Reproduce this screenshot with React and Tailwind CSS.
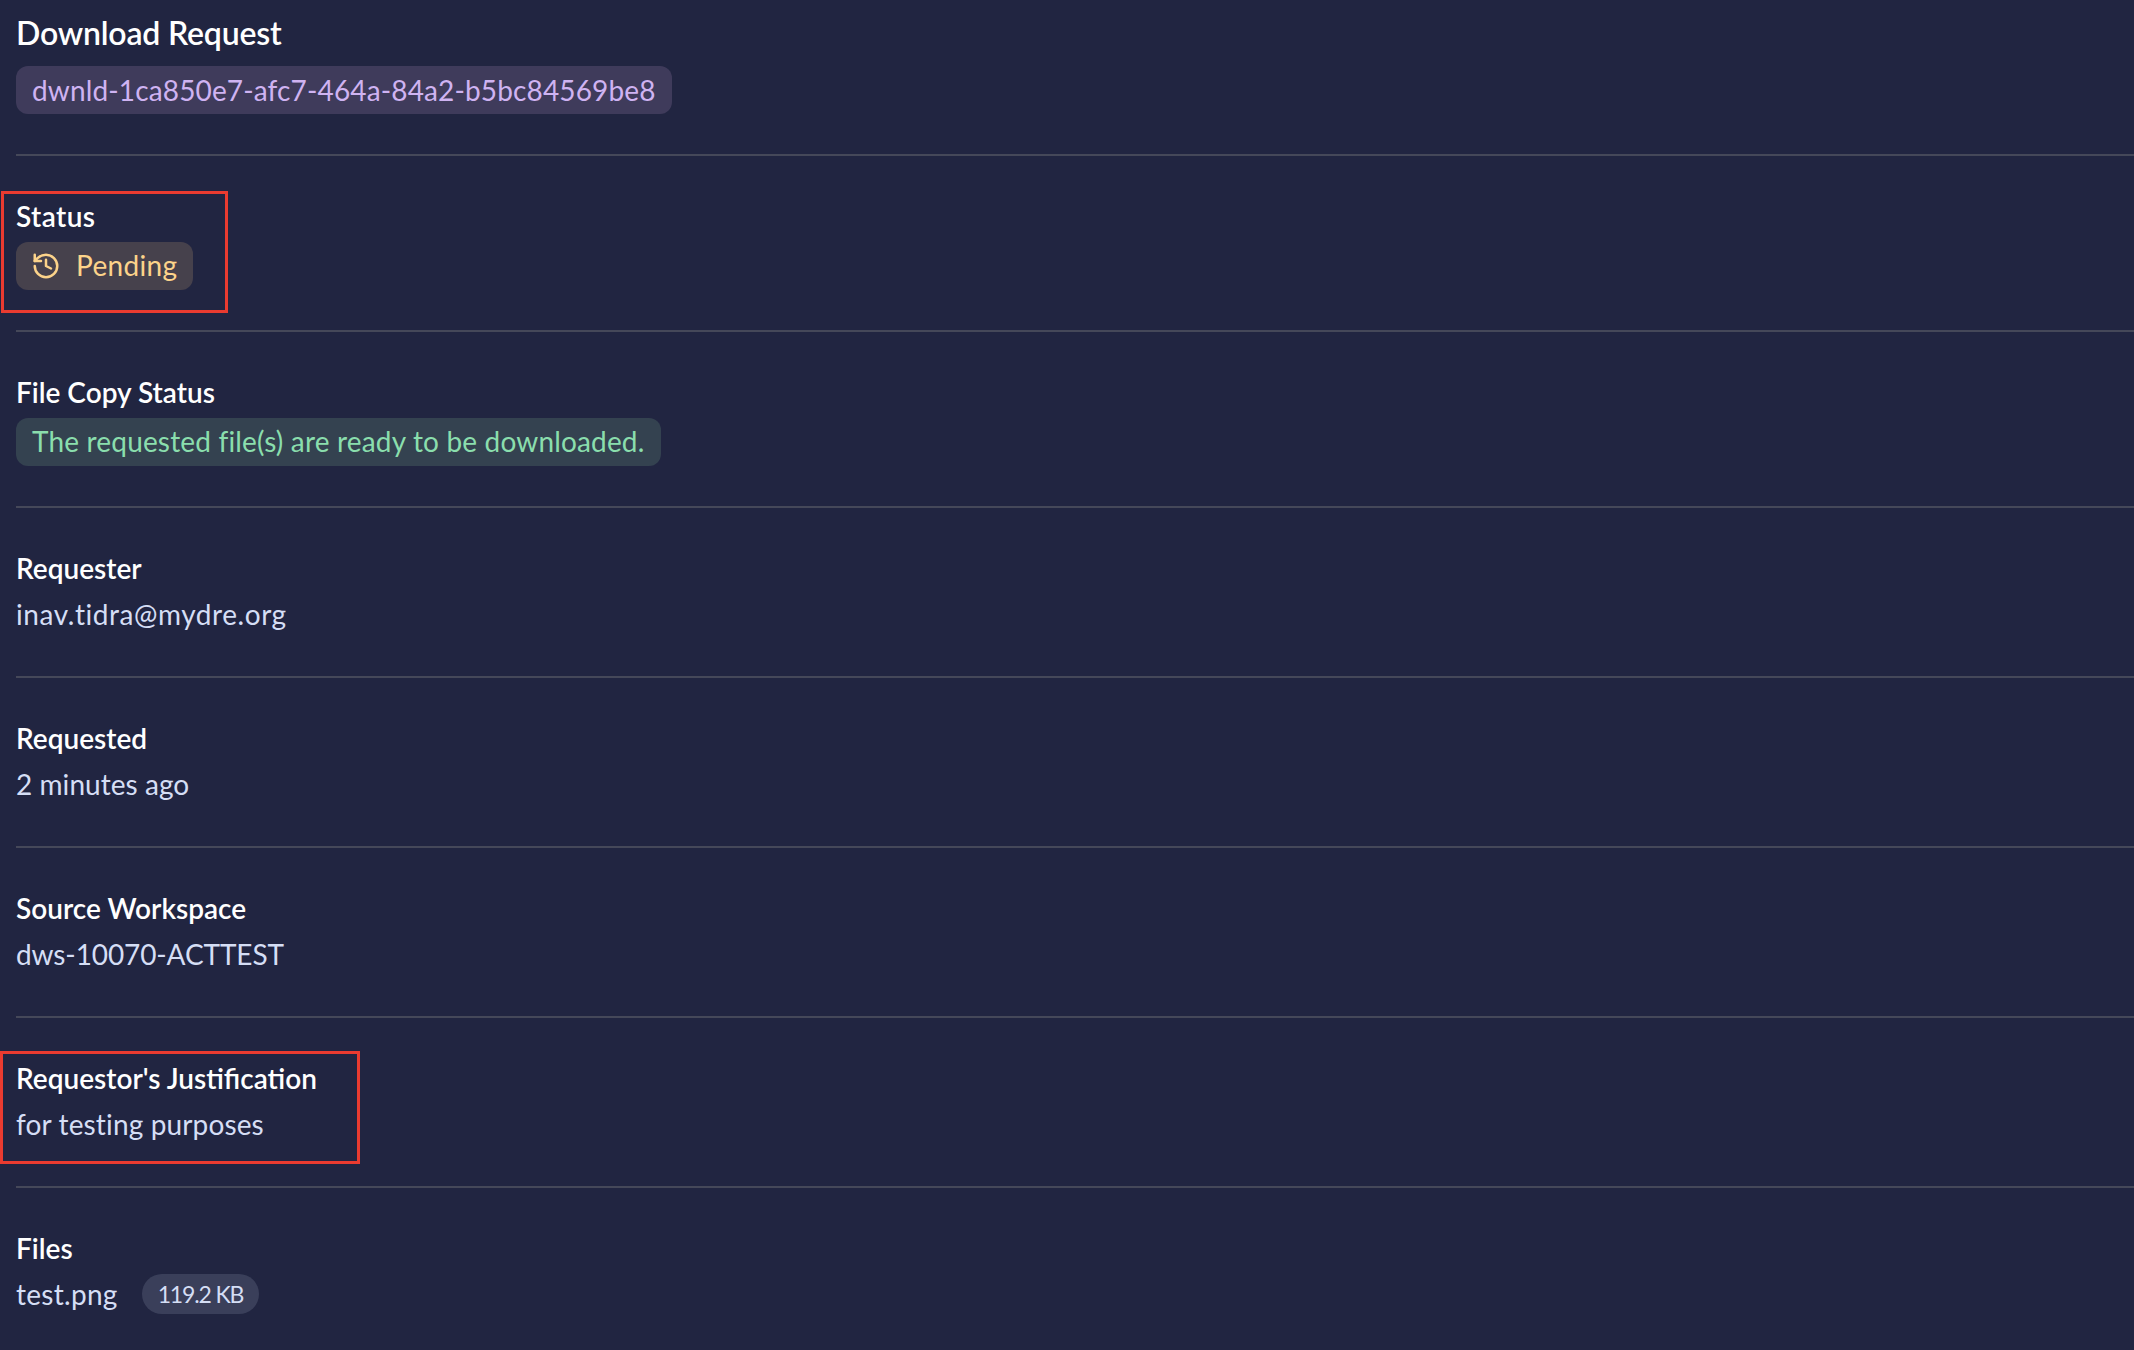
import React from 'react';
import { History } from 'lucide-react';

function Label({ children, className = '' }) {
  return <div className={`h-[38px] mb-2 text-[28px] leading-[40px] font-semibold text-white ${className}`}>{children}</div>;
}

function TextRow({ label, tracking, children }) {
  return (
    <div className="relative border-b-2 border-[#454859] py-10">
      <Label>{label}</Label>
      <div className={`h-[42px] text-[28px] leading-[40px] text-[#d5def5] ${tracking}`}>{children}</div>
    </div>
  );
}

export default function App() {
  return (
    <div className="h-[1350px] overflow-hidden bg-[#212541] pl-4 font-['Lato',sans-serif]">
      <div className="relative border-b-2 border-[#454859] pt-3 pb-10">
        <h1 className="h-[46px] mb-2 text-[32px] leading-[42px] font-semibold tracking-[-0.006em] text-white">Download Request</h1>
        <span className="inline-flex h-12 items-center rounded-[12px] bg-[#3f3b5b] px-4 text-[28px] tracking-[0.005em] text-[#cfb3f2]">
          dwnld-1ca850e7-afc7-464a-84a2-b5bc84569be8
        </span>
      </div>

      <div className="relative border-b-2 border-[#454859] py-10">
        <Label className="tracking-[0.015em]">Status</Label>
        <span className="inline-flex h-12 items-center rounded-[12px] bg-[#46414c] pl-[15px] pr-4 text-[28px] leading-[40px] tracking-[0.012em] text-[#fcd38a]">
          <History size={30} strokeWidth={2} className="mr-[15px]" />
          <span className="pb-[2px]">Pending</span>
        </span>
        <div className="absolute left-[-15px] top-[35px] h-[122px] w-[227px] border-[3px] border-[#ea3b30]" />
      </div>

      <div className="relative border-b-2 border-[#454859] py-10">
        <Label>File Copy Status</Label>
        <span className="inline-flex h-12 items-center rounded-[12px] bg-[#344250] px-4 pb-[2px] text-[28px] tracking-[0.006em] text-[#8adead]">
          The requested file(s) are ready to be downloaded.
        </span>
      </div>

      <TextRow label="Requester" tracking="tracking-[0.02em]">inav.tidra@mydre.org</TextRow>
      <TextRow label="Requested" tracking="tracking-[0.002em]">2 minutes ago</TextRow>
      <TextRow label="Source Workspace" tracking="tracking-[-0.004em]">dws-10070-ACTTEST</TextRow>
      <TextRow label="Requestor's Justification" tracking="tracking-[0.005em]">
        for testing purposes
        <div className="absolute left-[-16px] top-[33px] h-[113px] w-[360px] border-[3px] border-[#ea3b30]" />
      </TextRow>

      <div className="relative py-10">
        <Label>Files</Label>
        <div className="flex h-10 items-center text-[28px] tracking-[0.01em] text-[#d5def5]">
          <span>test.png</span>
          <span className="ml-6 flex h-10 items-center rounded-full bg-[#3a3f5a] px-4 text-[23px] tracking-[-0.05em]">119.2 KB</span>
        </div>
      </div>
    </div>
  );
}
